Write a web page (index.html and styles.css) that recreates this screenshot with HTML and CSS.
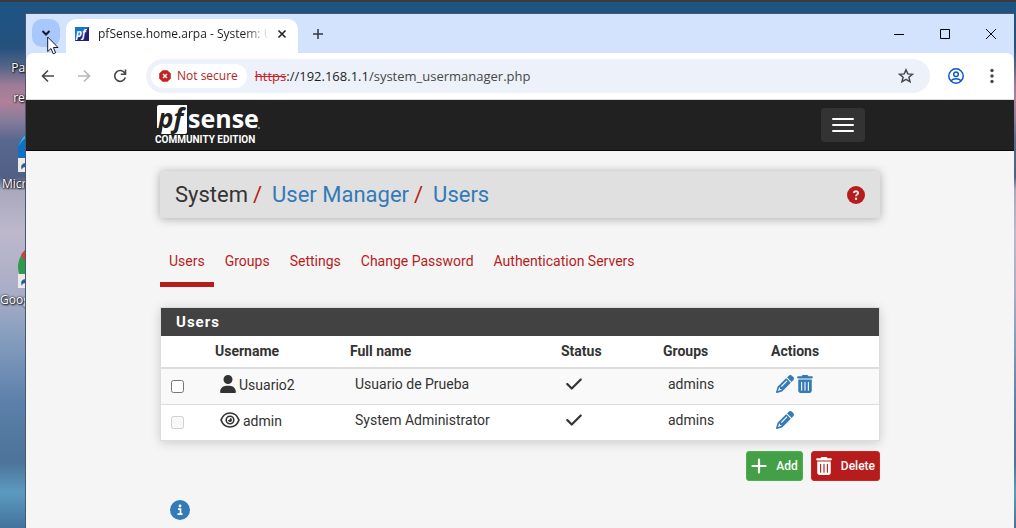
FILE: index.html
```html
<!DOCTYPE html>
<html lang="en">
<head>
<meta charset="utf-8">
<meta name="viewport" content="width=device-width, initial-scale=1">
<title>pfSense.home.arpa - System: User Manager: Users</title>
<link rel="stylesheet" href="styles.css">
</head>
<body>
<svg class="symbols" aria-hidden="true">
  <symbol id="pencil" viewBox="0 0 512 512"><path d="M410.3 231l11.3-11.3-33.9-33.9-62.1-62.1L291.7 89.8l-11.3 11.3-22.6 22.6L58.6 322.9c-10.4 10.4-18 23.3-22.2 37.4L1 480.7c-2.5 8.4-.2 17.5 6.1 23.7s15.3 8.5 23.7 6.1l120.3-35.4c14.1-4.2 27-11.8 37.4-22.2L387.7 253.7 410.3 231zM160 399.4l-9.1 22.7c-4 3.1-8.5 5.4-13.3 6.9L59.4 452l23-78.1c1.4-4.9 3.8-9.4 6.9-13.3l22.7-9.1v32c0 8.8 7.2 16 16 16h32zM362.7 18.7L348.3 33.2 325.7 55.8 314.3 67.1l33.9 33.9 62.1 62.1 33.9 33.9 11.3-11.3 22.6-22.6 14.5-14.5c25-25 25-65.5 0-90.5L453.3 18.7c-25-25-65.5-25-90.5 0zm-47.4 168l-144 144c-6.2 6.2-16.4 6.2-22.6 0s-6.2-16.4 0-22.6l144-144c6.2-6.2 16.4-6.2 22.6 0s6.2 16.4 0 22.6z"/></symbol>
  <symbol id="trash" viewBox="0 0 448 512"><path fill-rule="evenodd" d="M135.2 17.7C140.6 6.8 151.7 0 163.8 0h120.4c12.1 0 23.2 6.8 28.6 17.7L320 32h96c17.7 0 32 14.3 32 32s-14.3 32-32 32H32C14.3 96 0 81.7 0 64s14.3-32 32-32h96zM32 128h384v320c0 35.300-28.700 64-64 64H96c-35.300 0-64-28.700-64-64zM128 192c-8.800 0-16 7.200-16 16v224c0 8.800 7.200 16 16 16s16-7.200 16-16V208c0-8.800-7.200-16-16-16zM224 192c-8.800 0-16 7.200-16 16v224c0 8.800 7.200 16 16 16s16-7.200 16-16V208c0-8.800-7.200-16-16-16zM320 192c-8.800 0-16 7.200-16 16v224c0 8.800 7.200 16 16 16s16-7.200 16-16V208c0-8.800-7.200-16-16-16z"/></symbol>
  <symbol id="check" viewBox="0 0 448 512"><path d="M438.6 105.400c12.500 12.500 12.500 32.800 0 45.300l-256 256c-12.500 12.500-32.800 12.500-45.300 0l-128-128c-12.500-12.500-12.500-32.800 0-45.300s32.800-12.500 45.300 0L160 338.700 393.400 105.400c12.500-12.500 32.800-12.500 45.300 0z"/></symbol>
  <symbol id="user" viewBox="0 0 448 512"><path d="M224 256A128 128 0 1 0 224 0a128 128 0 1 0 0 256zm-45.700 48C79.800 304 0 383.800 0 482.300C0 498.700 13.300 512 29.700 512H418.300c16.400 0 29.700-13.300 29.700-29.700C448 383.800 368.200 304 269.700 304H178.300z"/></symbol>
  <symbol id="eye" viewBox="0 0 20 18"><path d="M1 9C2.500 5 5.800 2 10 2s7.500 3 9 7c-1.500 4-4.800 7-9 7s-7.500-3-9-7z" fill="none" stroke="currentColor" stroke-width="1.700"/><circle cx="10" cy="9" r="3.800" fill="none" stroke="currentColor" stroke-width="1.600"/><path d="M10 7a2 2 0 1 1-2 2c1.200.200 2.200-.700 2-2z"/></symbol>
  <symbol id="shortcut" viewBox="0 0 14 14"><path d="M0 0h14v14H0z" fill="#eeeae6"/><path d="M4 12C2 8 4 5 8 5V2l5 5-5 5V9C5 9 4 10 4 12z" fill="#275c9c"/></symbol>
</svg>

<div class="desktop">
  <div class="shortcut shortcut-bin">
    <svg width="34" height="40" viewBox="0 0 34 40"><path d="M4 6v30h26V6M16 3h10" fill="#58798f" stroke="#dde5ea" stroke-width="2"/></svg>
    <span>Papelera de reciclaje</span>
  </div>
  <div class="shortcut shortcut-edge">
    <svg width="44" height="44" viewBox="0 0 44 44"><circle cx="22" cy="22" r="22" fill="#0873c9"/><path d="M1 17A22 22 0 0 1 22 0v5C12 5 5 9 1 17z" fill="#35b5e6"/><use href="#shortcut" y="29" width="14" height="14"/></svg>
    <span>Microsoft Edge</span>
  </div>
  <div class="shortcut shortcut-chrome">
    <svg width="44" height="44" viewBox="0 0 44 44"><circle cx="22" cy="22" r="22" fill="#2c9b4a"/><path d="M3 10A22 22 0 0 1 41 10L22 22 12 24z" fill="#d93c2f"/><use href="#shortcut" y="29" width="14" height="14"/></svg>
    <span>Google Chrome</span>
  </div>
</div>

<div class="window">
  <div class="tabstrip">
    <button class="tab-search" type="button" aria-label="Search tabs"><svg width="10" height="8" viewBox="0 0 10 8"><path d="M1.500 2L5 5.500 8.500 2" fill="none" stroke="#111c33" stroke-width="2"/></svg></button>
    <div class="browser-tab">
      <svg class="favicon" width="14" height="14" viewBox="0 0 14 14"><defs><linearGradient id="fav" x2="1" y2="1"><stop offset=".45" stop-color="#1475cf"/><stop offset=".55" stop-color="#20207c"/></linearGradient></defs><path d="M0 0h14v14H0z" fill="url(#fav)"/><text x="1" y="10" class="favicon-text">pf</text></svg>
      <span class="tab-title">pfSense.home.arpa - System: User Manager</span>
      <button class="tab-close" type="button" aria-label="Close tab"><svg width="10" height="10" viewBox="0 0 10 10"><path d="M1.500 1.500l7 7m0-7l-7 7" stroke="#222" stroke-width="1.600"/></svg></button>
    </div>
    <button class="new-tab" type="button" aria-label="New tab"><svg width="12" height="12" viewBox="0 0 12 12"><path d="M6 1v10M1 6h10" stroke="#35383d" stroke-width="1.500"/></svg></button>
    <div class="window-controls">
      <button type="button" aria-label="Minimize"><svg width="10" height="10"><path d="M0 5.500h10" stroke="#000"/></svg></button>
      <button type="button" aria-label="Maximize"><svg width="10" height="10"><path d="M.5.500h9v9h-9z" fill="none" stroke="#000"/></svg></button>
      <button type="button" aria-label="Close"><svg width="10" height="10"><path d="M0 0l10 10M10 0L0 10" stroke="#000"/></svg></button>
    </div>
  </div>

  <div class="toolbar">
    <button type="button" aria-label="Back"><svg width="14" height="14" viewBox="0 0 14 14"><path d="M13 7H2M7 1.500L1.500 7 7 12.500" fill="none" stroke="#45484b" stroke-width="1.600"/></svg></button>
    <button type="button" aria-label="Forward" disabled><svg width="14" height="14" viewBox="0 0 14 14"><path d="M1 7h11M7 1.500L12.500 7 7 12.500" fill="none" stroke="#b5b6b8" stroke-width="1.600"/></svg></button>
    <button type="button" aria-label="Reload"><svg width="14" height="14" viewBox="0 0 14 14"><path d="M11.800 4.200A5.400 5.400 0 1 0 12.300 8.500M12.500.500v4.700H7.800" fill="none" stroke="#45484b" stroke-width="1.600"/></svg></button>
    <div class="address">
      <button class="insecure" type="button"><svg width="12" height="12" viewBox="0 0 12 12"><path d="M3.600.200h4.800L11.800 3.600v4.800L8.400 11.800H3.600L.200 8.400V3.600z" fill="#c5221f"/><path d="M4 4l4 4m0-4L4 8" stroke="#fff" stroke-width="1.400"/></svg>Not secure</button>
      <span class="url"><s>https</s>://192.168.1.1<span>/system_usermanager.php</span></span>
      <button class="star" type="button" aria-label="Bookmark this tab"><svg width="16" height="16" viewBox="0 0 16 16"><path d="M8 1.800l1.800 4.100 4.600.400-3.500 3 1.100 4.500L8 11.400l-4 2.400 1.100-4.500-3.500-3 4.600-.4z" fill="none" stroke="#45484b" stroke-width="1.500"/></svg></button>
    </div>
    <button class="profile" type="button" aria-label="Profile"><svg width="16" height="16" viewBox="0 0 16 16" fill="none" stroke="#0b57d0" stroke-width="1.500"><circle cx="8" cy="8" r="7.200"/><circle cx="8" cy="6.200" r="2.300"/><path d="M3 12.700c2.500-2.500 7.500-2.500 10 0"/></svg></button>
    <button class="menu" type="button" aria-label="Menu"><svg width="16" height="16" fill="#45484b"><circle cx="8" cy="2.500" r="1.700"/><circle cx="8" cy="8" r="1.700"/><circle cx="8" cy="13.500" r="1.700"/></svg></button>
  </div>

  <header class="navbar">
    <div class="navbar-inner">
      <a class="brand" href="#" aria-label="pfSense Community Edition">
        <svg width="106" height="29" viewBox="0 0 106 29"><path d="M4 0h28v27a2 2 0 0 1-2 2H6l1-6H2V2a2 2 0 0 1 2-2z" fill="#fff"/><text x="3" y="23" class="logo-pf">pf</text><text x="33" y="23" class="logo-sense">sense</text><circle cx="104" cy="23" r="1" fill="#999"/></svg>
        <span>COMMUNITY EDITION</span>
      </a>
      <button class="toggler" type="button" aria-label="Toggle navigation"><i></i><i></i><i></i></button>
    </div>
  </header>

  <main class="container">
    <div class="page-header">
      <h1>System<b>/</b><a href="#">User Manager</a><b>/</b><a href="#">Users</a></h1>
      <a class="help" href="#" aria-label="Help"><svg width="18" height="18" viewBox="0 0 18 18"><circle cx="9" cy="9" r="9" fill="#b71c1c"/><path d="M6.800 7C6.900 4.600 11.200 4.600 11.200 7 11.200 8.600 9 8.500 9 10.300" fill="none" stroke="#e0e0e0" stroke-width="1.900"/><circle cx="9" cy="12.800" r="1.200" fill="#e0e0e0"/></svg></a>
    </div>
    <nav class="pills">
      <a class="active" href="#">Users</a><a href="#">Groups</a><a href="#">Settings</a><a href="#">Change Password</a><a href="#">Authentication Servers</a>
    </nav>
    <section class="panel">
      <h2>Users</h2>
      <table>
        <colgroup><col class="c-check"><col class="c-name"><col class="c-full"><col class="c-status"><col class="c-groups"><col></colgroup>
        <thead><tr><td></td><th>Username</th><th>Full name</th><th>Status</th><th>Groups</th><th>Actions</th></tr></thead>
        <tbody>
          <tr>
            <td><input type="checkbox" aria-label="Select Usuario2"></td>
            <td><span class="cell"><svg width="16" height="18"><use href="#user"/></svg><span>Usuario2</span></span></td>
            <td>Usuario de Prueba</td>
            <td><svg class="tick" width="16" height="18"><use href="#check"/></svg></td>
            <td>admins</td>
            <td><span class="actions"><a href="#" aria-label="Edit user"><svg width="18" height="18"><use href="#pencil"/></svg></a><a href="#" aria-label="Delete user"><svg width="16" height="18"><use href="#trash"/></svg></a></span></td>
          </tr>
          <tr>
            <td><input type="checkbox" aria-label="Select admin" disabled></td>
            <td><span class="cell"><svg width="20" height="18"><use href="#eye"/></svg><span>admin</span></span></td>
            <td>System Administrator</td>
            <td><svg class="tick" width="16" height="18"><use href="#check"/></svg></td>
            <td>admins</td>
            <td><span class="actions"><a href="#" aria-label="Edit user"><svg width="18" height="18"><use href="#pencil"/></svg></a></span></td>
          </tr>
        </tbody>
      </table>
    </section>
    <div class="buttons">
      <button class="btn add" type="button"><svg width="16" height="16" viewBox="0 0 16 16"><path d="M8 1.500v13M1.500 8h13" stroke="#fff" stroke-width="2.200" stroke-linecap="round"/></svg>Add</button>
      <button class="btn delete" type="button"><svg width="16" height="18"><use href="#trash"/></svg>Delete</button>
    </div>
    <button class="info" type="button" aria-label="Show information"><svg width="20" height="20" viewBox="0 0 20 20"><circle cx="10" cy="10" r="10" fill="#337ab7"/><circle cx="10" cy="6" r="1.400" fill="#fff"/><path d="M8 9.200h2.500V14M7.500 14.200h5" fill="none" stroke="#fff" stroke-width="1.700"/></svg></button>
  </main>
</div>

<svg class="cursor" width="12" height="19" viewBox="0 0 12 19"><path d="M.7 1v14.500l3.300-3 2.200 5.300 2.400-1L6.400 11.500H11z" fill="#fff" stroke="#111a2c"/></svg>
</body>
</html>
```
FILE: styles.css
```css
* { box-sizing: border-box; }
body {
  margin: 0;
  height: 100vh;
  overflow: hidden;
  position: relative;
  font-family: Roboto, "Liberation Sans", sans-serif;
  font-size: 14px;
  line-height: 20px;
  color: #333;
}
button { border: 0; padding: 0; background: none; font: inherit; color: inherit; }
a { text-decoration: none; color: #337ab7; }
svg { display: block; flex: none; overflow: visible; }
.symbols { position: absolute; width: 0; height: 0; overflow: hidden; }

/* Desktop */
.desktop {
  position: absolute;
  inset: 0;
  border-top: 2px solid #3b3b3d;
  background: linear-gradient(#1d5482 0, #24517e 45px, #526487 64px, #a07c98 84px, #b08098 100px, #877c9c 118px, #59688f 138px, #505f84 175px, #aaa8bd 188px, #bdb8cc 230px, #a9adc6 290px, #829cbd 340px, #5c80aa 400px, #4c7399 460px, #5d9ac0 490px, #40719a 528px);
}
.shortcut { position: absolute; left: 0; color: #fff; font: 12px/15px "Open Sans", sans-serif; text-shadow: 1px 1px 2px #000, 0 0 2px #000; }
.shortcut svg { margin-left: 18px; }
.shortcut-bin { top: 10px; }
.shortcut-bin svg { margin-left: 22px; }
.shortcut-bin span { display: block; width: 60px; margin: 8px 0 0 6px; text-align: center; }
.shortcut-edge { top: 127px; }
.shortcut-chrome { top: 243px; }
.shortcut-edge span, .shortcut-chrome span { display: block; margin-top: 3px; white-space: nowrap; }
.shortcut-edge span { margin-left: 2px; }

/* Browser */
.window {
  position: absolute;
  inset: 13px 2px 0 25px;
  border: 1px solid #4b5770;
  border-width: 1px 0 0 1px;
  background: #f5f5f5;
  overflow: hidden;
}
.tabstrip {
  display: flex;
  height: 39px;
  background: #d3e3fd;
  font: 12px/16px "Open Sans", sans-serif;
}
.tab-search {
  width: 28px;
  height: 28px;
  margin: 5px 6px 0;
  border-radius: 10px;
  background: #a8c7fa;
  display: grid;
  place-items: center;
}
.browser-tab {
  display: flex;
  align-items: center;
  width: 232px;
  margin-top: 5px;
  padding: 0 11px 5px 9px;
  border-radius: 10px 10px 0 0;
  background: #fff;
}
.favicon-text { font: italic bold 10px "Open Sans", sans-serif; fill: #fff; }
.tab-title {
  flex: 1;
  margin: 0 7px 0 9px;
  overflow: hidden;
  white-space: nowrap;
  color: #1f1f1f;
  -webkit-mask-image: linear-gradient(90deg, #000 85%, transparent);
  mask-image: linear-gradient(90deg, #000 85%, transparent);
}
.new-tab { margin-left: 14px; }
.window-controls { display: flex; margin-left: auto; }
.window-controls button { width: 46px; display: grid; place-items: center; }
.toolbar {
  display: flex;
  align-items: center;
  height: 47px;
  padding: 0 14px 0 15px;
  border-bottom: 1px solid #dcdcdc;
  border-radius: 8px 8px 0 0;
  background: #fff;
  box-shadow: 0 0 0 8px #d3e3fd;
  clip-path: inset(0);
  gap: 22px;
}
.address {
  flex: 1;
  display: flex;
  align-items: center;
  height: 34px;
  margin-left: -3px;
  padding: 0 16px 0 5px;
  border-radius: 17px;
  background: #ecf1fa;
  font: 13px/20px "Open Sans", sans-serif;
}
.insecure {
  display: flex;
  align-items: center;
  gap: 6px;
  height: 24px;
  padding: 0 9px 0 8px;
  border-radius: 12px;
  background: #fff;
  color: #b3261e;
  font-size: 12px;
}
.url { margin-left: 8px; color: #1f1f1f; }
.url s { color: #c5221f; }
.url span { color: #474747; }
.star { margin-left: auto; }
.profile { margin-left: -4px; }
.menu { margin-left: -2px; }

/* Site header */
.navbar { background: #212121; border-bottom: 1px solid #080808; }
.navbar-inner {
  display: flex;
  justify-content: space-between;
  align-items: center;
  width: 100%;
  max-width: 750px;
  height: 50px;
  margin: 0 auto;
  padding: 0 30px 0 10px;
}
.brand { display: block; color: #fff; font-size: 10px; line-height: 12px; font-weight: 700; }
.logo-pf { font: italic bold 26px "Open Sans", sans-serif; fill: #212121; }
.logo-sense { font: bold 25px "Open Sans", sans-serif; fill: #fff; }
.toggler {
  display: grid;
  gap: 4px;
  padding: 10px 11px;
  border-radius: 4px;
  background: #333;
}
.toggler i { width: 22px; height: 2px; border-radius: 1px; background: #fff; }

/* Content */
.container { width: 100%; max-width: 750px; margin: 0 auto; padding: 20px 15px 0; }
.page-header {
  display: flex;
  justify-content: space-between;
  align-items: center;
  height: 47px;
  padding: 0 15px;
  border-radius: 2px;
  background: #e0e0e0;
  box-shadow: 0 1px 10px rgba(0, 0, 0, .3);
}
h1 { margin: 0; font-size: 22px; line-height: 28px; font-weight: 400; }
h1 b { margin: 0 10px 0 5px; font-weight: 400; color: #b71c1c; }
.pills { display: flex; gap: 2px; margin-top: 23px; }
.pills a { padding: 10px 9px 11px; border-bottom: 5px solid transparent; color: #b71c1c; }
.pills .active { border-color: #b71c1c; }
.panel {
  margin-top: 20px;
  border: 1px solid #ddd;
  background: #fff;
  box-shadow: 0 2px 10px rgba(0, 0, 0, .16);
}
h2 {
  margin: 0;
  padding: 4px 15px;
  background: #424242;
  color: #fff;
  font-size: 15px;
  line-height: 20px;
  font-weight: 700;
  letter-spacing: 1px;
}
table { width: 100%; border-collapse: collapse; table-layout: fixed; }
.c-check { width: 49px; }
.c-name { width: 135px; }
.c-full { width: 211px; }
.c-status { width: 102px; }
.c-groups { width: 108px; }
th { padding: 4px 5px 6px; text-align: left; font-weight: 700; }
thead td, thead th { height: 32px; border-bottom: 2px solid #ddd; }
tbody td { height: 36px; padding: 0 10px 4px; vertical-align: middle; }
tbody td:first-child { padding-bottom: 0; }
tbody tr { background: #fff; }
tbody tr:first-child { background: #f9f9f9; }
tbody tr + tr td { border-top: 1px solid #ddd; }
tbody td svg { fill: currentColor; }
input[type="checkbox"] { display: block; margin: 0; width: 13px; height: 13px; }
.cell, .actions { display: flex; align-items: center; gap: 3px; }
.cell span { padding-top: 2px; }
.btn {
  display: flex;
  align-items: center;
  height: 30px;
  padding: 0 4px;
  border: 1px solid;
  border-radius: 3px;
  color: #fff;
  font-size: 12px;
  font-weight: 500;
  gap: 9px;
}
.buttons { display: flex; justify-content: flex-end; gap: 8px; margin-top: 10px; }
.btn svg { fill: currentColor; }
.add { background: #43a047; border-color: #4caf50; }
.delete { background: #b71c1c; border-color: #c62828; }
.info { display: block; margin: 19px 0 0 10px; }
.cursor { position: absolute; left: 47px; top: 36px; }
```
